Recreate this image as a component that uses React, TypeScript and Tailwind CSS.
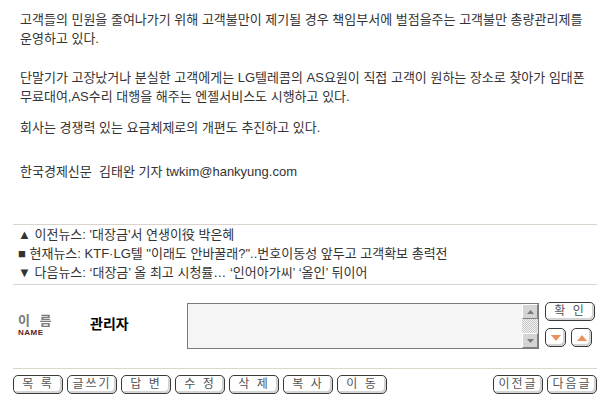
import React from 'react';

const font = { fontFamily: '"Liberation Sans", "Noto Sans CJK KR", sans-serif' };

const Btn: React.FC<{ label: string; w?: string }> = ({ label, w = 'w-[50px]' }) => (
  <button
    className={`${w} h-[19px] rounded-[5px] border border-[#3a3a3a] bg-white shadow-[inset_-2px_-2px_0_#d4d4d4] text-[12px] leading-[17px] text-[#555] tracking-[2px] flex items-center justify-center`}
  >
    {label}
  </button>
);

const Tri: React.FC<{ up?: boolean; color: string }> = ({ up, color }) => (
  <svg width="10" height="6" viewBox="0 0 10 6">
    {up ? <polygon points="0,6 10,6 5,0" fill={color} /> : <polygon points="0,0 10,0 5,6" fill={color} />}
  </svg>
);

const ScrollBtn: React.FC<{ up?: boolean }> = ({ up }) => (
  <div className="w-[16px] h-[15px] bg-[#d4d4d4] border border-t-white border-l-white border-r-[#808080] border-b-[#808080] flex items-center justify-center">
    <svg width="7" height="4" viewBox="0 0 7 4">
      {up ? <polygon points="0,4 7,4 3.5,0" fill="#7a7a7a" /> : <polygon points="0,0 7,0 3.5,4" fill="#7a7a7a" />}
    </svg>
  </div>
);

export default function App() {
  return (
    <div className="w-[608px] h-[411px] bg-white overflow-hidden text-[#333]" style={font}>
      <div className="pl-[20px] pt-[10px] text-[13px] leading-[19px] whitespace-nowrap">
        <p>
          고객들의 민원을 줄여나가기 위해 고객불만이 제기될 경우 책임부서에 벌점을주는 고객불만 총량관리제를
          <br />
          운영하고 있다.
        </p>
        <p className="mt-[20px]">
          단말기가 고장났거나 분실한 고객에게는 LG텔레콤의 AS요원이 직접 고객이 원하는 장소로 찾아가 임대폰
          <br />
          무료대여,AS수리 대행을 해주는 엔젤서비스도 시행하고 있다.
        </p>
        <p className="mt-[12px]">회사는 경쟁력 있는 요금체제로의 개편도 추진하고 있다.</p>
        <p className="mt-[25px]">한국경제신문&nbsp; 김태완 기자 twkim@hankyung.com</p>
      </div>

      <div className="mt-[43px] mx-[13px] w-[584px] border-t border-b border-[#d9d4cc] pb-[2px] text-[13px] leading-[19px] whitespace-nowrap">
        <div className="pl-[5px]">▲ 이전뉴스: '대장금'서 연생이役 박은혜</div>
        <div className="pl-[5px]">■ 현재뉴스: KTF·LG텔 "이래도 안바꿀래?"..번호이동성 앞두고 고객확보 총력전</div>
        <div className="pl-[5px]">▼ 다음뉴스: ‘대장금’ 올 최고 시청률… ‘인어아가씨’ ‘올인’ 뒤이어</div>
      </div>

      <div className="mt-[18px] flex h-[46px]">
        <div className="w-[90px] pl-[18px] pt-[11px]">
          <div className="text-[13px] leading-[13px] font-bold text-[#7a7a7a] tracking-[3px]">이 름</div>
          <div className="text-[8px] leading-[8px] font-bold text-[#5a1e1e] tracking-[0.5px] mt-[2px]">NAME</div>
        </div>
        <div className="w-[97px] pt-[14px] text-[14px] leading-[15px] font-bold text-black">관리자</div>
        <div className="w-[352px] h-[46px] border border-[#7a7a7a] bg-[#f5f5f5] flex justify-end">
          <div className="w-[16px] flex flex-col">
            <ScrollBtn up />
            <div className="flex-1 bg-[repeating-conic-gradient(#c8c8c8_0%_25%,#f2f2f2_0%_50%)] bg-size-[2px_2px]" />
            <ScrollBtn />
          </div>
        </div>
        <div className="ml-[6px] -mt-[1px] flex flex-col gap-[7px]">
          <Btn label="확 인" />
          <div className="flex gap-[5px]">
            <button className="w-[21px] h-[19px] rounded-[5px] border border-[#3a3a3a] bg-white shadow-[inset_-2px_-2px_0_#d4d4d4] flex items-center justify-center">
              <Tri color="#e8925e" />
            </button>
            <button className="w-[21px] h-[19px] rounded-[5px] border border-[#3a3a3a] bg-white shadow-[inset_-2px_-2px_0_#d4d4d4] flex items-center justify-center">
              <Tri up color="#e8925e" />
            </button>
          </div>
        </div>
      </div>

      <div className="mt-[19px] mx-[13px] w-[584px] h-px bg-[#ddd6cc]" />

      <div className="mt-[6px] mx-[13px] w-[584px] flex justify-between">
        <div className="flex gap-[4px]">
          <Btn label="목 록" />
          <Btn label="글쓰기" />
          <Btn label="답 변" />
          <Btn label="수 정" />
          <Btn label="삭 제" />
          <Btn label="복 사" />
          <Btn label="이 동" />
        </div>
        <div className="flex gap-[4px]">
          <Btn label="이전글" />
          <Btn label="다음글" />
        </div>
      </div>
    </div>
  );
}
